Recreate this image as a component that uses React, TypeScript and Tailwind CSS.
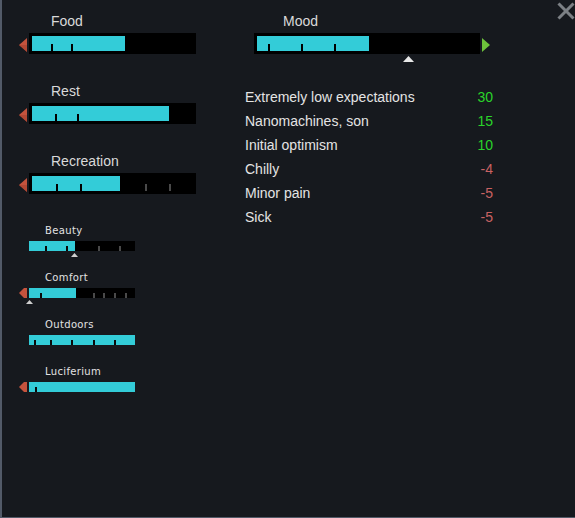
import React from "react";

type Tick = number;

function LeftArrow({ small }: { small?: boolean }) {
  return small ? (
    <svg width="8" height="10" viewBox="0 0 8 10" className="block">
      <polygon points="0,5 5,0 8,0 8,10 5,10" fill="#c4533d" />
    </svg>
  ) : (
    <svg width="8" height="14" viewBox="0 0 8 14" className="block">
      <polygon points="0,7 8,0 8,14" fill="#c4533d" />
      <polygon points="0,7 8,7 8,14" fill="#a8412f" opacity="0.6" />
    </svg>
  );
}

function BigBar({
  width,
  fill,
  ticks,
}: {
  width: number;
  fill: number;
  ticks: Tick[];
}) {
  return (
    <div className="relative h-[21px] bg-black" style={{ width }}>
      <div className="absolute left-[3px] top-[3px] h-[15px] bg-[#33ccd8]" style={{ width: fill }} />
      {ticks.map((t) => (
        <div
          key={t}
          className="absolute top-[11px] h-[7px] w-[2px]"
          style={{ left: t, backgroundColor: t < fill + 3 ? "#000000" : "#4a4a4a" }}
        />
      ))}
    </div>
  );
}

function SmallBar({ fill, ticks, marker }: { fill: number; ticks: Tick[]; marker?: number }) {
  return (
    <div className="relative h-[10px] w-[106px] bg-black">
      <div className="absolute left-0 top-0 h-[10px] bg-[#33ccd8]" style={{ width: fill }} />
      {ticks.map((t) => (
        <div
          key={t}
          className="absolute bottom-0 h-[5px] w-[2px]"
          style={{ left: t, backgroundColor: t < fill ? "#0a0a0a" : "#4a4a4a" }}
        />
      ))}
      {marker !== undefined && (
        <svg
          width="7"
          height="4"
          viewBox="0 0 7 4"
          className="absolute top-[12px] block"
          style={{ left: marker }}
        >
          <polygon points="3.5,0 7,4 0,4" fill="#cfcfcf" />
        </svg>
      )}
    </div>
  );
}

function BigNeed({
  label,
  fill,
  ticks,
  className,
}: {
  label: string;
  fill: number;
  ticks: Tick[];
  className?: string;
}) {
  return (
    <div className={className}>
      <div className="h-[16px] pl-[32px] text-[14px] leading-[16px] text-[#dadada]">{label}</div>
      <div className="mt-[4px] flex items-center">
        <div className="mr-[2px] mt-[3px] w-[8px]">
          <LeftArrow />
        </div>
        <BigBar width={167} fill={fill} ticks={ticks} />
      </div>
    </div>
  );
}

function SmallNeed({
  label,
  fill,
  ticks,
  arrow,
  marker,
  className,
}: {
  label: string;
  fill: number;
  ticks: Tick[];
  arrow?: boolean;
  marker?: number;
  className?: string;
}) {
  return (
    <div className={className}>
      <div
        className="h-[12px] pl-[26px] text-[10px] leading-[12px] tracking-[0.35px] text-[#e2e2e2]"
        style={{ fontFamily: '"DejaVu Sans", sans-serif' }}
      >
        {label}
      </div>
      <div className="mt-[4px] flex items-center">
        <div className="mr-[2px] w-[8px]">{arrow && <LeftArrow small />}</div>
        <SmallBar fill={fill} ticks={ticks} marker={marker} />
      </div>
    </div>
  );
}

const thoughts: { text: string; value: string; good: boolean }[] = [
  { text: "Extremely low expectations", value: "30", good: true },
  { text: "Nanomachines, son", value: "15", good: true },
  { text: "Initial optimism", value: "10", good: true },
  { text: "Chilly", value: "-4", good: false },
  { text: "Minor pain", value: "-5", good: false },
  { text: "Sick", value: "-5", good: false },
];

export default function App() {
  return (
    <div
      className="relative flex h-[518px] w-[575px] overflow-hidden border-b border-l-2 border-[#525a68] bg-[#16191e]"
      style={{ fontFamily: '"Liberation Sans", Arial, sans-serif' }}
    >
      {/* close */}
      <svg
        width="18"
        height="18"
        viewBox="0 0 18 18"
        className="absolute right-0 top-[2px] block"
      >
        <line x1="1.5" y1="1.5" x2="16.5" y2="16.5" stroke="#7c8085" strokeWidth="3" />
        <line x1="16.5" y1="1.5" x2="1.5" y2="16.5" stroke="#7c8085" strokeWidth="3" />
      </svg>

      {/* left column */}
      <div className="w-[243px] shrink-0 pl-[17px] pt-[13px]">
        <BigNeed label="Food" fill={93} ticks={[22, 42]} />
        <BigNeed label="Rest" fill={137} ticks={[26, 48]} className="mt-[29px]" />
        <BigNeed
          label="Recreation"
          fill={88}
          ticks={[27, 51, 116, 140]}
          className="mt-[29px]"
        />
        <SmallNeed
          label="Beauty"
          fill={46}
          ticks={[16, 37, 69, 90]}
          marker={42}
          className="mt-[31px]"
        />
        <SmallNeed
          label="Comfort"
          fill={47}
          ticks={[11, 64, 74, 85, 96]}
          arrow
          marker={-3}
          className="mt-[21px]"
        />
        <SmallNeed
          label="Outdoors"
          fill={106}
          ticks={[5, 21, 42, 64, 85]}
          className="mt-[21px]"
        />
        <SmallNeed
          label="Luciferium"
          fill={106}
          ticks={[6]}
          arrow
          className="mt-[21px]"
        />
      </div>

      {/* right column */}
      <div className="pt-[13px]">
        <div className="h-[16px] pl-[38px] text-[14px] leading-[16px] text-[#dadada]">Mood</div>
        <div className="mt-[4px] flex items-center pl-[9px]">
          <div className="relative">
            <BigBar width={226} fill={112} ticks={[14, 47, 80]} />
            <svg
              width="11"
              height="6"
              viewBox="0 0 11 6"
              className="absolute left-[149px] top-[23px] block"
            >
              <polygon points="5.5,0 11,6 0,6" fill="#e8e8e8" />
            </svg>
          </div>
          <svg width="8" height="14" viewBox="0 0 8 14" className="ml-[2px] mt-[3px] block">
            <polygon points="0,0 8,7 0,14" fill="#6dc23b" />
          </svg>
        </div>
        <div className="mt-[31px] w-[248px]">
          {thoughts.map((t) => (
            <div key={t.text} className="flex h-[24px] items-center justify-between text-[14px] leading-[24px]">
              <span className="text-[#e4e4e4]">{t.text}</span>
              <span className={t.good ? "text-[#2ad42a]" : "text-[#c96262]"}>{t.value}</span>
            </div>
          ))}
        </div>
      </div>
    </div>
  );
}
